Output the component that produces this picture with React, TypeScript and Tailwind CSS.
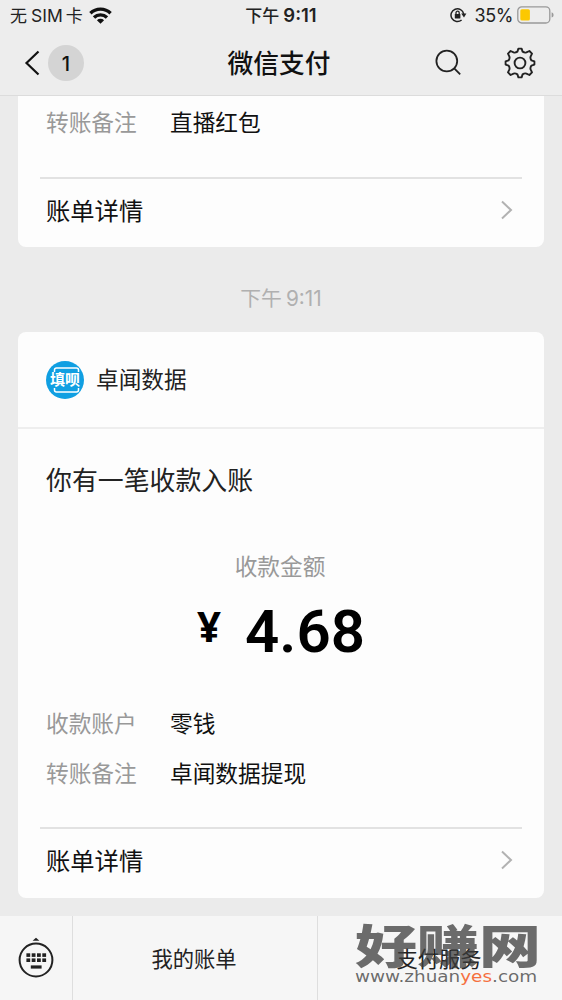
import type { ReactNode } from 'react';

function WifiIcon() {
  return (
    <svg width="23" height="17" viewBox="0 0 23 17" fill="none" stroke="#111" strokeWidth="3.4">
      <path d="M1.4 6.2a14.6 14.6 0 0 1 20.2 0" />
      <path d="M5 10.5a9.4 9.4 0 0 1 13 0" />
      <path d="M11.5 16.8 7.9 13.3a5.2 5.2 0 0 1 7.2 0z" fill="#111" stroke="none" />
    </svg>
  );
}

function RotationLockIcon() {
  return (
    <svg width="17" height="16" viewBox="0 0 17 16" fill="none" stroke="#222" strokeWidth="1.5">
      <path d="M11.6 13A6.4 6.4 0 1 1 13.7 7" />
      <path d="M11.2 6.6h5.2L14 10.4z" fill="#222" stroke="none" />
      <rect x="4.8" y="7" width="5.6" height="4.6" rx="0.6" fill="#222" stroke="none" />
      <path d="M6 7.4V5.8a1.6 1.6 0 0 1 3.2 0v1.6" strokeWidth="1.3" />
    </svg>
  );
}

function BatteryIcon() {
  return (
    <svg width="37" height="18" viewBox="0 0 37 18" fill="none">
      <rect x="0.8" y="0.8" width="32" height="16.2" rx="4" stroke="#999" strokeWidth="1.3" />
      <rect x="3.3" y="3.2" width="9.6" height="11.4" rx="1.6" fill="#fcc800" />
      <path d="M34.6 6.2q2 .7 2 2.7t-2 2.7z" fill="#999" />
    </svg>
  );
}

function SearchIcon() {
  return (
    <svg width="27" height="27" viewBox="0 0 27 27" fill="none" stroke="#222" strokeWidth="1.8">
      <circle cx="11.8" cy="12" r="10.4" />
      <path d="m19 19.2 6.2 6.2" />
    </svg>
  );
}

function GearIcon() {
  return (
    <svg width="32" height="32" viewBox="-16 -16 32 32" fill="none" stroke="#222" strokeWidth="1.9" strokeLinejoin="round">
      <path d="M-1.6-14.4H1.6L2.6-11.4Q4.6-10 6.4-10.6L9.4-12 12-9.4 10.6-6.4Q10-4.6 11.4-2.6L14.4-1.6V1.6L11.4 2.6Q10 4.6 10.6 6.4L12 9.4 9.4 12 6.4 10.6Q4.6 10 2.6 11.4L1.6 14.4H-1.6L-2.6 11.4Q-4.6 10-6.4 10.6L-9.4 12-12 9.4-10.6 6.4Q-10 4.6-11.4 2.6L-14.4 1.6V-1.6L-11.4-2.6Q-10-4.6-10.6-6.4L-12-9.4-9.4-12-6.4-10.6Q-4.6-10-2.6-11.4z" />
      <circle r="5.4" />
    </svg>
  );
}

function KeyboardIcon() {
  return (
    <svg width="36" height="42" viewBox="0 0 36 42" fill="#222">
      <path d="M14.6 3.8 18 .7l3.4 3.1z" />
      <circle cx="18" cy="23" r="16.4" fill="none" stroke="#222" strokeWidth="2" />
      {[8.4, 13.7, 19, 24.3].map((x) => (
        <g key={x}>
          <rect x={x} y="16.3" width="3.8" height="3.6" />
          <rect x={x} y="21.4" width="3.8" height="3.6" />
        </g>
      ))}
      <rect x="12.8" y="28.4" width="10.8" height="3.2" />
    </svg>
  );
}

function Row({ label, children }: { label: string; children: ReactNode }) {
  return (
    <div className="flex h-[50px] items-center pl-7 text-[22.7px] leading-none">
      <span className="w-[124px] text-[#999]">{label}</span>
      <span className="text-[#111]">{children}</span>
    </div>
  );
}

function DetailLink() {
  return (
    <div className="mx-[22px] flex h-[70px] items-center justify-between border-t-2 border-[#e2e2e2] pb-1.5 pl-1.5 pr-[9px] text-[24.3px] leading-none text-[#111]">
      <span>账单详情</span>
      <svg width="13" height="20" viewBox="0 0 13 20" fill="none" stroke="#b2b2b2" strokeWidth="2">
        <path d="m2 1.5 9 8.5-9 8.5" />
      </svg>
    </div>
  );
}

export default function App() {
  return (
    <div className="relative flex h-[1000px] w-[562px] flex-col overflow-hidden bg-[#ebebeb] font-['Noto_Sans_CJK_SC',sans-serif] text-[#222]">
      {/* Status bar and title */}
      <header className="h-24 shrink-0 border-b border-[#dcdcdc] bg-[#ededed]">
        <div className="grid h-[30px] grid-cols-3 items-center text-[17px] leading-none">
          <div className="flex items-center pl-2.5">
            <span className="pb-0.5">无</span>
            <span className="ml-1 mr-[3px] pt-0.5 font-['Inter',sans-serif] text-[17.5px]">SIM</span>
            <span className="pb-0.5">卡</span>
            <span className="ml-[6px]"><WifiIcon /></span>
          </div>
          <div className="flex items-center justify-center font-medium">
            <span className="pb-0.5">下午</span>
            <span className="ml-1 pt-px font-['Inter',sans-serif] text-[18.5px] font-semibold">9:11</span>
          </div>
          <div className="flex items-center justify-end pr-2">
            <RotationLockIcon />
            <span className="ml-[7px] mr-1 pt-0.5 font-['Inter',sans-serif] text-[18px] tracking-[-0.4px]">35%</span>
            <BatteryIcon />
          </div>
        </div>
        <div className="grid h-[65px] grid-cols-3 items-center">
          <div className="flex items-center pl-6">
            <svg width="16" height="26" viewBox="0 0 16 26" fill="none" stroke="#111" strokeWidth="2.2">
              <path d="M14.5 1.5 2.5 13l12 11.5" />
            </svg>
            <span className="ml-2 flex size-9 items-center justify-center rounded-full bg-[#d4d4d4] pt-0.5 font-['Inter',sans-serif] text-[20px] font-medium text-[#111]">1</span>
          </div>
          <h1 className="whitespace-nowrap pb-0.5 pr-1 text-center text-[25.7px] font-medium leading-none text-[#111]">微信支付</h1>
          <div className="flex items-center justify-end gap-[42px] pr-[26px]">
            <SearchIcon />
            <GearIcon />
          </div>
        </div>
      </header>

      {/* Message list */}
      <main className="h-[820px] shrink-0 px-[18px]">
        <section className="h-[151px] rounded-b-lg bg-[#fdfdfd] pt-px">
          <Row label="转账备注">直播红包</Row>
          <div className="h-[30px]" />
          <DetailLink />
        </section>

        <div className="flex h-[85px] items-center justify-center pt-4 text-[20.8px] leading-none text-[#b0b0b0]">
          <span>下午</span>
          <span className="ml-1 pt-[3px] font-['Inter',sans-serif]">9:11</span>
        </div>

        <section className="h-[566px] rounded-lg bg-[#fdfdfd]">
          <div className="flex h-[97px] items-center border-b-2 border-[#eeeeee] pl-7">
            <span className="relative flex size-[38px] items-center justify-center rounded-full bg-[#109fe2]">
              <svg className="absolute inset-0" width="38" height="38" viewBox="0 0 38 38" fill="none" stroke="#fff" strokeWidth="1.5">
                <path d="M8.5 11V9q0-2 2-2h20q2 0 2 2v2M8.5 27v2q0 2 2 2h20q2 0 2-2v-2" />
              </svg>
              <span className="relative whitespace-nowrap pb-0.5 text-[15px] font-bold leading-none text-white">填呗</span>
            </span>
            <span className="ml-3 text-[22.7px] leading-none">卓闻数据</span>
          </div>

          <h2 className="flex h-[103px] items-center pb-[3px] pl-7 text-[25.9px] leading-none">你有一笔收款入账</h2>

          <div className="flex h-[70px] items-center justify-center pb-0.5 pr-0.5 text-[22.7px] leading-none text-[#999]">收款金额</div>
          <div className="flex h-[60px] items-center justify-center font-['Roboto',sans-serif] text-black">
            <span className="mb-3 mr-6 font-['Noto_Sans',sans-serif] text-[42px] font-bold leading-none">¥</span>
            <span className="text-[60px] font-semibold leading-none">4.68</span>
          </div>

          <div className="h-[36px]" />
          <Row label="收款账户">零钱</Row>
          <Row label="转账备注">卓闻数据提现</Row>
          <div className="h-[29px]" />
          <DetailLink />
        </section>
      </main>

      {/* Bottom menu */}
      <footer className="flex h-[84px] shrink-0 bg-[#f6f6f6] text-[21.3px] leading-none">
        <div className="flex w-[73px] items-center justify-center border-r border-[#dedede]">
          <KeyboardIcon />
        </div>
        <div className="flex w-[245px] items-center justify-center border-r border-[#dedede] pb-px pr-0.5">我的账单</div>
        <div className="flex flex-1 items-center justify-center pb-px pr-0.5">支付服务</div>
      </footer>

      {/* Site watermark over the bottom menu */}
      <div className="pointer-events-none absolute left-[355px] top-[920px] w-[190px] text-[#3c3c3c]/75">
        <div className="origin-top-left scale-y-[0.74] whitespace-nowrap text-[62px] font-black leading-[62px]">好赚网</div>
        <div className="absolute left-0 top-[47px] origin-left scale-x-[1.15] whitespace-nowrap font-['DejaVu_Sans',sans-serif] text-[16px] leading-[20px]">
          www.zhuan<span className="text-[#f5703f]">yes</span>.com
        </div>
      </div>
    </div>
  );
}
